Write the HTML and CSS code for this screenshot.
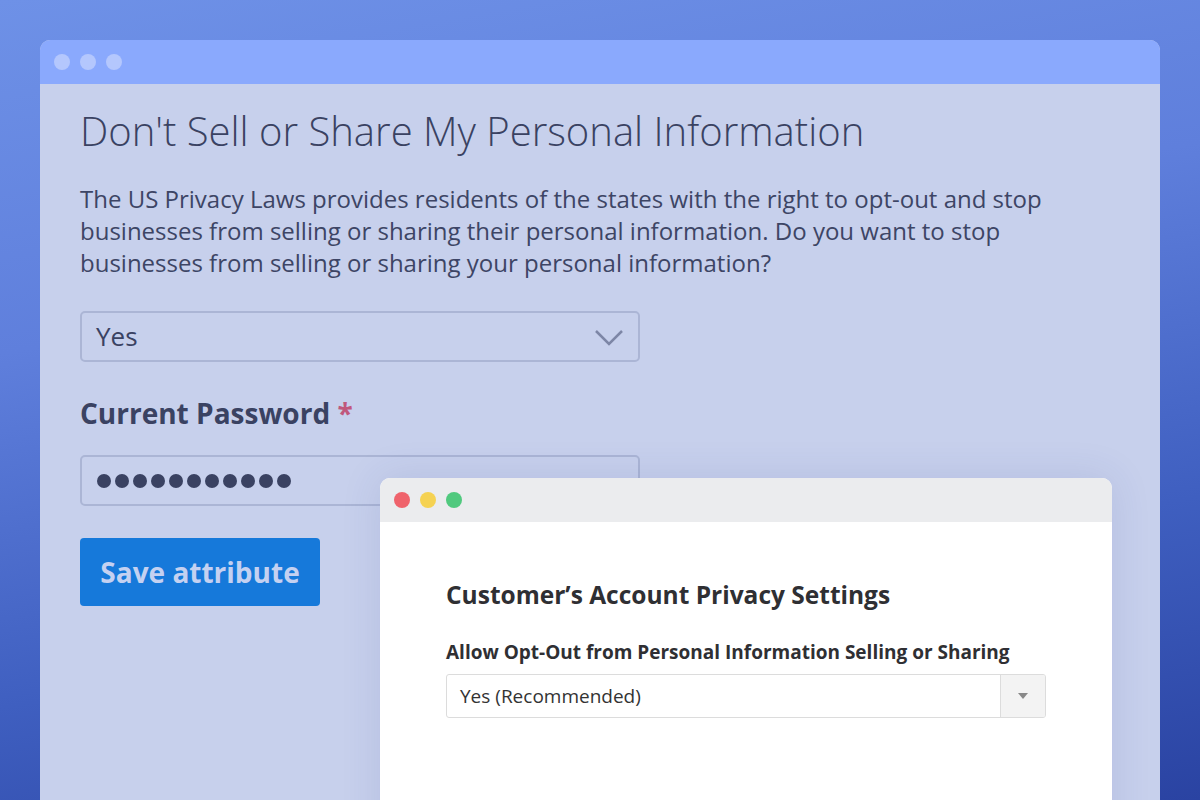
FILE: index.html
```html
<!DOCTYPE html>
<html lang="en">
<head>
<meta charset="utf-8">
<title>Don't Sell or Share My Personal Information</title>
<link rel="stylesheet" href="styles.css">
</head>
<body>
<div class="stage">
  <div class="window">
    <div class="titlebar">
      <span class="dot"></span><span class="dot"></span><span class="dot"></span>
    </div>
    <div class="content">
      <h1 class="title">Don't Sell or Share My Personal Information</h1>
      <p class="lead">The US Privacy Laws provides residents of the states with the right to opt-out and stop businesses from selling or sharing their personal information. Do you want to stop businesses from selling or sharing your personal information?</p>
      <div class="select">
        <span>Yes</span>
        <svg class="chev" width="30" height="18" viewBox="0 0 30 18"><path d="M2 2 L15 15 L28 2" fill="none" stroke="#7d86a6" stroke-width="2.5"/></svg>
      </div>
      <label class="label">Current Password <span class="req">*</span></label>
      <div class="password">
        <span class="pdot"></span><span class="pdot"></span><span class="pdot"></span><span class="pdot"></span><span class="pdot"></span><span class="pdot"></span><span class="pdot"></span><span class="pdot"></span><span class="pdot"></span><span class="pdot"></span><span class="pdot"></span>
      </div>
      <button class="btn">Save attribute</button>
    </div>

    <div class="popup">
      <div class="popbar">
        <span class="mdot red"></span><span class="mdot yellow"></span><span class="mdot green"></span>
      </div>
      <div class="popbody">
        <h2 class="poptitle">Customer’s Account Privacy Settings</h2>
        <div class="poplabel">Allow Opt-Out from Personal Information Selling or Sharing</div>
        <div class="popselect">
          <span class="popval">Yes (Recommended)</span>
          <span class="poparrow"><svg width="12" height="8" viewBox="0 0 12 8"><path d="M1 1 L11 1 L6 7 Z" fill="#888"/></svg></span>
        </div>
      </div>
    </div>
  </div>
</div>
</body>
</html>
```

FILE: styles.css
```css
* { box-sizing: border-box; }
html, body { margin: 0; padding: 0; }
body {
  width: 1200px;
  height: 800px;
  overflow: hidden;
  font-family: "Open Sans", "Noto Sans", sans-serif;
  background: linear-gradient(170deg, #6e91e7 0%, #5f7fdc 35%, #3f5fc0 70%, #2a43a2 100%);
}
.stage {
  padding: 40px 40px 0 40px;
  height: 800px;
}
.window {
  position: relative;
  height: 760px;
  border-radius: 10px 10px 0 0;
  background: #c7d0ec;
  overflow: hidden;
}
.titlebar {
  height: 44px;
  background: #8aa9fd;
  display: flex;
  align-items: center;
  gap: 10px;
  padding-left: 14px;
}
.dot {
  width: 16px; height: 16px; border-radius: 50%;
  background: #b4c7fd;
}
.content {
  padding: 21px 40px 0 40px;
  display: flex;
  flex-direction: column;
  align-items: flex-start;
  color: #3a4262;
}
.title {
  margin: 0;
  font-weight: 300;
  font-size: 40px;
  line-height: 52px;
  color: #3a4262;
}
.lead {
  margin: 26px 0 0 0;
  font-size: 24px;
  line-height: 32px;
  width: 1040px;
  color: #3d4565;
}
.select {
  margin-top: 32px;
  width: 560px;
  height: 51px;
  border: 2px solid #abb5d5;
  border-radius: 5px;
  display: flex;
  align-items: center;
  justify-content: space-between;
  padding: 0 14px 2px 14px;
  font-size: 26px;
  color: #3a4262;
}
.chev { margin-top: 4px; }
.label {
  margin-top: 33px;
  font-size: 28px;
  font-weight: 700;
  line-height: 36px;
  color: #3a4262;
}
.req { color: #c0587c; }
.password {
  margin-top: 24px;
  width: 560px;
  height: 51px;
  border: 2px solid #abb5d5;
  border-radius: 5px;
  display: flex;
  align-items: center;
  gap: 4px;
  padding-left: 15px;
}
.pdot {
  width: 14px; height: 14px; border-radius: 50%;
  background: #3a4262;
}
.btn {
  margin-top: 32px;
  width: 240px;
  height: 68px;
  border: none;
  border-radius: 4px;
  background: #1679da;
  color: #c4d1f1;
  font-family: "Open Sans", "Noto Sans", sans-serif;
  font-weight: 700;
  font-size: 28px;
  padding: 0;
}
.popup {
  position: absolute;
  left: 340px;
  top: 438px;
  width: 732px;
  height: 400px;
  background: #fff;
  border-radius: 10px 10px 0 0;
  overflow: hidden;
  box-shadow: 0 0 40px rgba(40, 60, 140, 0.12);
}
.popbar {
  height: 44px;
  background: #ebecee;
  display: flex;
  align-items: center;
  gap: 10px;
  padding-left: 14px;
}
.mdot { width: 16px; height: 16px; border-radius: 50%; }
.red { background: #ef636c; }
.yellow { background: #f5d252; }
.green { background: #50c97e; }
.popbody {
  padding: 56px 66px 0 66px;
}
.poptitle {
  margin: 0;
  font-size: 24.5px;
  font-weight: 700;
  line-height: 34px;
  color: #2f2f33;
}
.poplabel {
  margin-top: 27px;
  font-size: 19px;
  font-weight: 700;
  line-height: 26px;
  color: #2f2f33;
}
.popselect {
  margin-top: 9px;
  width: 600px;
  height: 44px;
  border: 1px solid #dcdcdc;
  border-radius: 3px;
  display: flex;
  align-items: center;
  justify-content: space-between;
  overflow: hidden;
}
.popval {
  padding-left: 13px;
  font-size: 19px;
  color: #333;
}
.poparrow {
  width: 45px;
  height: 100%;
  background: #f3f3f3;
  border-left: 1px solid #dcdcdc;
  display: flex;
  align-items: center;
  justify-content: center;
}
```
